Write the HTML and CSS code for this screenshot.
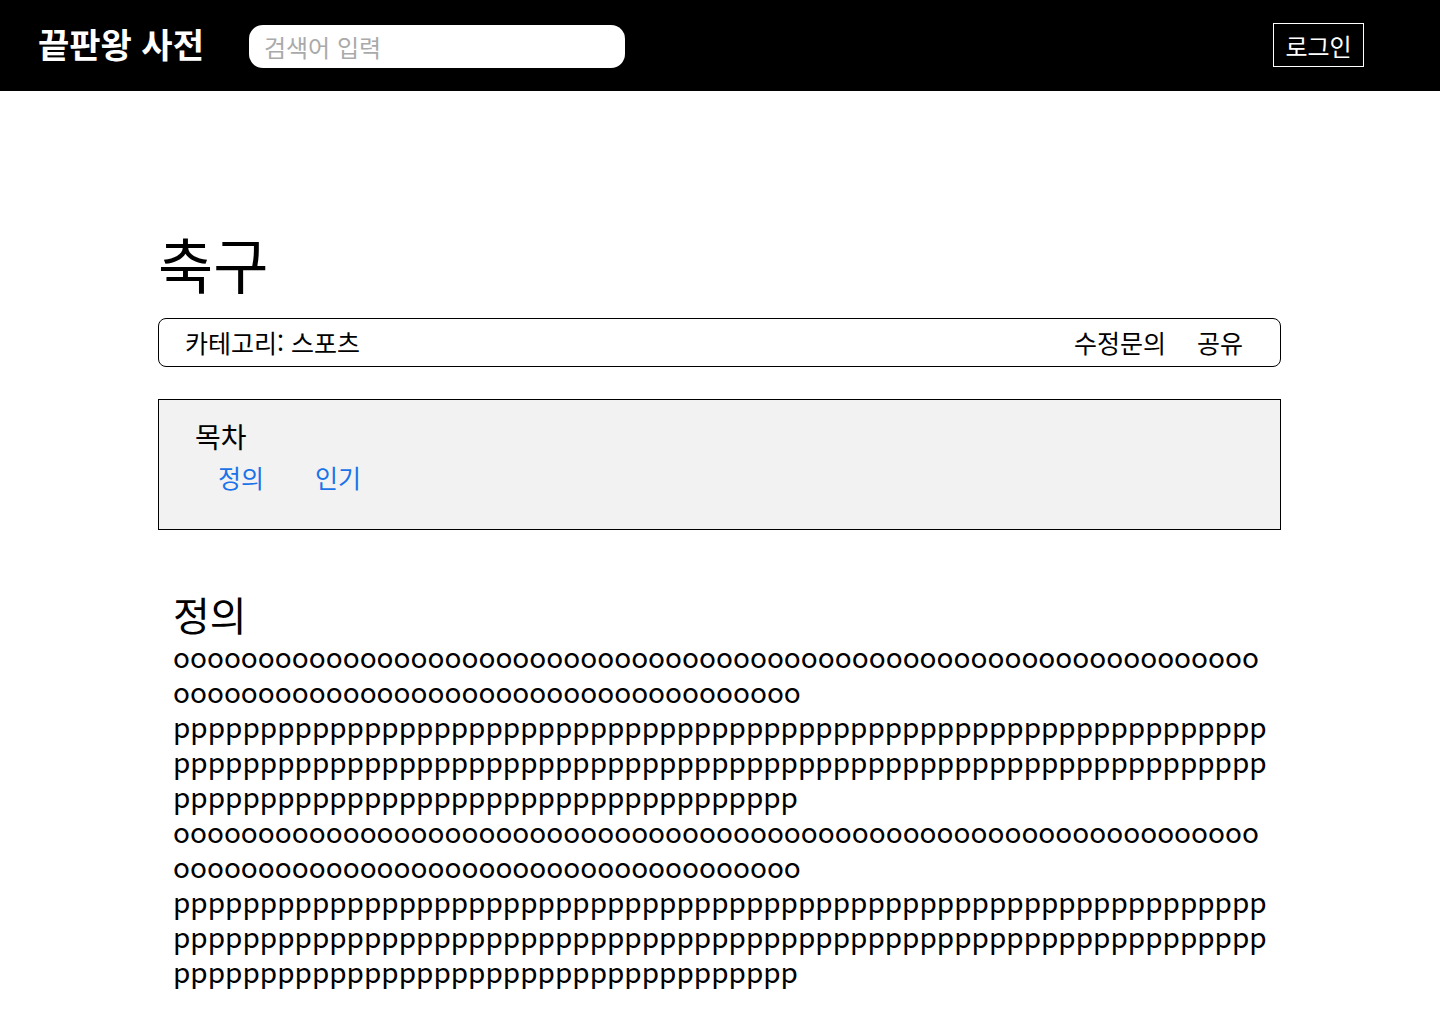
FILE: index.html
```html
<!DOCTYPE html>
<html lang="ko">
<head>
<meta charset="utf-8">
<title>축구 - 끝판왕 사전</title>
<link rel="stylesheet" href="styles.css">
</head>
<body>
<header class="topbar">
  <div class="logo">끝판왕 사전</div>
  <input class="search" type="text" placeholder="검색어 입력">
  <div class="spacer"></div>
  <button class="login">로그인</button>
</header>
<main class="page">
  <h1 class="title">축구</h1>
  <div class="catbar">
    <span class="cat">카테고리: 스포츠</span>
    <div class="actions"><span>수정문의</span><span>공유</span></div>
  </div>
  <nav class="toc">
    <div class="toc-title">목차</div>
    <div class="toc-links"><a href="#def">정의</a><a href="#pop">인기</a></div>
  </nav>
  <section class="section" id="def">
    <h2 class="sec-title">정의</h2>
    <p class="body-text">ooooooooooooooooooooooooooooooooooooooooooooooooooooooooooooooooooooooooooooooooooooooooooooooooooooo pppppppppppppppppppppppppppppppppppppppppppppppppppppppppppppppppppppppppppppppppppppppppppppppppppppppppppppppppppppppppppppppppppppppppppppppppppppppppppppppppp ooooooooooooooooooooooooooooooooooooooooooooooooooooooooooooooooooooooooooooooooooooooooooooooooooooo pppppppppppppppppppppppppppppppppppppppppppppppppppppppppppppppppppppppppppppppppppppppppppppppppppppppppppppppppppppppppppppppppppppppppppppppppppppppppppppppppp</p>
  </section>
</main>
</body>
</html>
```

FILE: styles.css
```css
* { box-sizing: border-box; }
body {
  margin: 0;
  font-family: "Noto Sans CJK KR", "Noto Sans", sans-serif;
  color: #000;
  background: #fff;
}
.topbar {
  height: 91px;
  background: #000;
  display: flex;
  align-items: center;
  padding: 0 76px 0 38px;
}
.logo {
  color: #fff;
  font-weight: 700;
  font-size: 34px;
  line-height: 1;
  margin-top: -4px;
}
.search {
  margin-left: 45px;
  margin-top: 2px;
  width: 376px;
  height: 43px;
  border: none;
  border-radius: 14px;
  background: #fff;
  padding: 0 15px;
  font-family: inherit;
  font-size: 24px;
  outline: none;
}
.search::placeholder { color: #aaaaaa; }
.spacer { flex: 1; }
.login {
  width: 91px;
  height: 44px;
  margin-top: -2px;
  background: #000;
  color: #fff;
  border: 1px solid #fff;
  font-family: inherit;
  font-size: 24px;
  line-height: 1;
  padding: 2px 0 0;
}
.page {
  margin: 0 159px 0 158px;
}
.title {
  margin: 132px 0 0 0;
  font-size: 60px;
  font-weight: 400;
  line-height: 80px;
}
.catbar {
  margin-top: 15px;
  height: 49px;
  border: 1px solid #000;
  border-radius: 8px;
  display: flex;
  align-items: center;
  justify-content: space-between;
  padding: 0 37px 2px 26px;
  font-size: 25px;
}
.actions { display: flex; gap: 31px; }
.toc {
  margin-top: 32px;
  height: 131px;
  background: #f2f2f2;
  border: 1px solid #000;
  padding: 15px 36px;
}
.toc-title { font-size: 28px; line-height: 42px; }
.toc-links {
  display: flex;
  gap: 51px;
  padding-left: 23px;
  font-size: 25px;
  line-height: 40px;
}
.toc-links a { color: #1a73e8; text-decoration: none; }
.section { padding: 0 13px 0 15px; margin-top: 60px; }
.sec-title {
  margin: 0;
  font-size: 40px;
  font-weight: 400;
  line-height: 49px;
}
.body-text {
  margin: 0;
  font-size: 28px;
  line-height: 35px;
  overflow-wrap: anywhere;
}
```
